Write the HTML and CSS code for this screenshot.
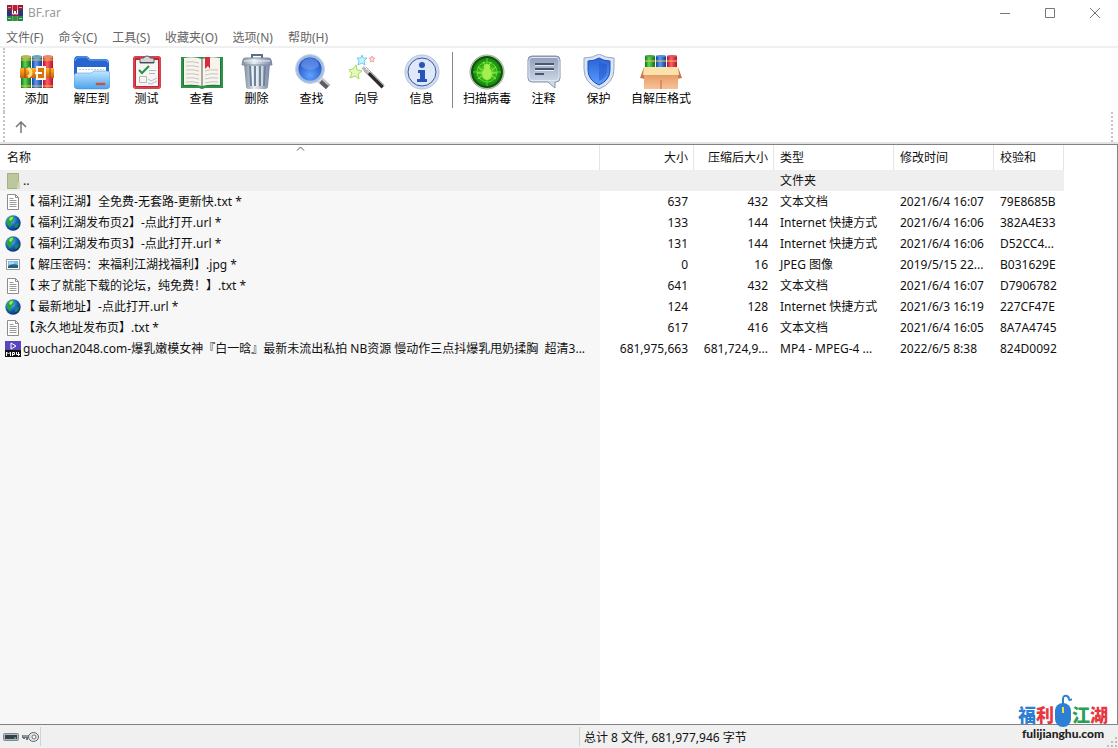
FILE: index.html
```
<!DOCTYPE html>
<html lang="zh-CN">
<head>
    <meta charset="UTF-8">
    <meta name="viewport" content="width=device-width, initial-scale=1.0">
    <title>BF.rar</title>
    <link rel="stylesheet" href="styles.css">
</head>
<body>
    <!-- Gradientes e iconos compartidos -->
    <svg class="defs" width="0" height="0" aria-hidden="true">
        <defs>
            <linearGradient id="green" x1="0" x2="1" y1="0" y2="0"><stop offset="0" stop-color="#0a7420"/><stop offset=".4" stop-color="#5fd64d"/><stop offset="1" stop-color="#0b6a2a"/></linearGradient>
            <linearGradient id="blue" x1="0" x2="1" y1="0" y2="0"><stop offset="0" stop-color="#1244a4"/><stop offset=".4" stop-color="#5a9bf5"/><stop offset="1" stop-color="#163c94"/></linearGradient>
            <linearGradient id="red" x1="0" x2="1" y1="0" y2="0"><stop offset="0" stop-color="#b30d2a"/><stop offset=".4" stop-color="#ff5e6e"/><stop offset="1" stop-color="#b8102c"/></linearGradient>
            <linearGradient id="gold" x1="0" x2="0" y1="0" y2="1"><stop offset="0" stop-color="#ffb52b"/><stop offset="1" stop-color="#cf5d08"/></linearGradient>
            <linearGradient id="sky" x1="0" x2="0" y1="0" y2="1"><stop offset="0" stop-color="#c0e7ff"/><stop offset="1" stop-color="#4ba3ec"/></linearGradient>
            <linearGradient id="steel" x1="0" x2="1" y1="0" y2="0"><stop offset="0" stop-color="#7d8c9e"/><stop offset=".4" stop-color="#e6edf4"/><stop offset="1" stop-color="#7686a0"/></linearGradient>
            <linearGradient id="cloud" x1="0" x2="0" y1="0" y2="1"><stop offset="0" stop-color="#8f9db8"/><stop offset="1" stop-color="#dbe4f2"/></linearGradient>
            <linearGradient id="shield" x1="0" x2="0" y1="0" y2="1"><stop offset="0" stop-color="#2a63d6"/><stop offset="1" stop-color="#5c9cff"/></linearGradient>
            <linearGradient id="carton" x1="0" x2="0" y1="0" y2="1"><stop offset="0" stop-color="#e39a64"/><stop offset="1" stop-color="#f9c298"/></linearGradient>
            <radialGradient id="lens" cx=".5" cy=".75" r=".7"><stop offset="0" stop-color="#5fa2ff"/><stop offset="1" stop-color="#1a46b8"/></radialGradient>
            <radialGradient id="radar"><stop offset="0" stop-color="#8af03c"/><stop offset=".6" stop-color="#2cae12"/><stop offset="1" stop-color="#0b7a0a"/></radialGradient>
            <radialGradient id="earth" cx=".35" cy=".3" r=".8"><stop offset="0" stop-color="#8fd0ff"/><stop offset=".45" stop-color="#1d6cc8"/><stop offset="1" stop-color="#07246b"/></radialGradient>
        </defs>
        <symbol id="txt" viewBox="0 0 16 16">
            <path d="M2.500.5h8l3 3v12h-11z" fill="#fff" stroke="#8c8c8c"/>
            <path d="M10.500.5v3h3" fill="none" stroke="#8c8c8c"/>
            <path d="M4.500 4.500h4M4.500 6.500h7M4.500 8.500h7M4.500 10.500h7M4.500 12.500h7" stroke="#9a9a9a"/>
        </symbol>
        <symbol id="url" viewBox="0 0 16 16">
            <circle cx="8" cy="8" r="7.700" fill="url(#earth)"/>
            <path d="M2 5q2-4 6-4 2 1 1 4l-3 3q1 3-1 4-4-2-3-7z" fill="#27a536"/>
            <path d="M10 9q4-2 4 0-1 4-4 4z" fill="#178a4c"/>
            <path d="M4 4q2-3 4-2 0 3-3 4z" fill="#95e672"/>
        </symbol>
    </svg>

    <header class="titlebar">
        <svg class="app-icon" viewBox="0 0 16 16" aria-hidden="true">
            <path d="M0 0h5v16H0z" fill="#9e2233"/><path d="M5.500 0h5v16h-5z" fill="#c01d38"/><path d="M11 0h5v16h-5z" fill="#8d2034"/>
            <path d="M0 5h5v6H0zM11 5h5v6h-5z" fill="#27357f"/>
            <path d="M0 11h5v5H0zM11 11h5v5h-5z" fill="#1e8a48"/><path d="M5.500 11h5v5h-5z" fill="#2c9a3c"/>
            <path d="M4 5h8v6H4z" fill="#8d2348"/><path d="M5.500 5v4h2V6M8.500 6v3h2V5" fill="none" stroke="#fff"/>
            <path d="M1 2.500h3M12 2.500h3M1 13.500h3M12 13.500h3" stroke="#d9a6a0"/>
        </svg>
        <h1>BF.rar</h1>
        <div class="window-buttons">
            <button aria-label="最小化"><svg viewBox="0 0 12 12"><path d="M1 6.500h10"/></svg></button>
            <button aria-label="最大化"><svg viewBox="0 0 12 12"><path d="M1.500 1.500h9v9h-9z"/></svg></button>
            <button aria-label="关闭"><svg viewBox="0 0 12 12"><path d="M1 1l10 10M11 1L1 11"/></svg></button>
        </div>
    </header>

    <nav class="menu">
        <button>文件(F)</button>
        <button>命令(C)</button>
        <button>工具(S)</button>
        <button>收藏夹(O)</button>
        <button>选项(N)</button>
        <button>帮助(H)</button>
    </nav>

    <div class="bars">
        <div class="toolbar">
            <button>
                <svg class="icon" viewBox="0 0 36 36">
                    <path d="M2 2h10v32H2z" fill="url(#green)"/><path d="M13 2h10v32H13z" fill="url(#blue)"/><path d="M24 2h10v32H24z" fill="url(#red)"/>
                    <path d="M2 6h10M13 6h10M24 6h10M2 32h10M13 32h10M24 32h10" stroke="#f3c53d"/>
                    <ellipse cx="7" cy="3" rx="5" ry="2" fill="#b0bc52"/><ellipse cx="18" cy="3" rx="5" ry="2" fill="#6aa6c2"/><ellipse cx="29" cy="3" rx="5" ry="2" fill="#e88a63"/>
                    <path d="M1 14h34v10H1z" fill="url(#gold)"/>
                    <path d="M6 13v11M31 13v11" stroke="#93470d"/>
                    <path d="M9 14q6 5 0 9" fill="none" stroke="#ffe07a" stroke-width="3"/>
                    <path d="M18 13h8v12h-8z" fill="#d5750f" stroke="#fff2dc" stroke-width="2"/><path d="M16 19h7" stroke="#fff" stroke-width="2"/>
                </svg>
                <span>添加</span>
            </button>
            <button>
                <svg class="icon" viewBox="0 0 36 36">
                    <path d="M0 7q0-5 4-5h8q2 0 4 3h15q4 0 4 4v12H0z" fill="#2765cf"/>
                    <path d="M1 7q1-4 4-4h7q2 1 3 3h16q3 0 3 3" fill="none" stroke="#6aa9ff"/>
                    <path d="M3 13h29v10H3z" fill="#fff"/><path d="M5 15.500h25" stroke="#b9c8db" stroke-dasharray="2 1"/>
                    <path d="M0 22q0-3 3-3h14l3-2h13q3 0 3 3v11q0 4-4 4H4q-4 0-4-4z" fill="url(#sky)" stroke="#3f8fd8" stroke-width=".5"/>
                    <path d="M22 29h9v2h-9z" fill="#e3442d" stroke="#b0645b" stroke-width=".5"/>
                </svg>
                <span>解压到</span>
            </button>
            <button>
                <svg class="icon" viewBox="0 0 36 36">
                    <rect x="4" y="2" width="28" height="33" rx="3" fill="#c4232f"/><rect x="5" y="3" width="26" height="31" rx="2" fill="none" stroke="#e56470"/>
                    <path d="M7 6h22v26H7z" fill="#f5f5f5"/>
                    <path d="M11 9V5q0-1 2-1h2q0-2 3-2t3 2h2q2 0 2 1v4z" fill="#d5d5d5" stroke="#5d5f64"/><path d="M11 8.500h14" stroke="#494b50"/>
                    <path d="M10 16l3 3 7-7" fill="none" stroke="#24913c" stroke-width="2"/>
                    <path d="M20 16.500h7M10.500 22.500h7v6h-7zM20 19.500h6" fill="none" stroke="#b3b8bb"/>
                    <path d="M19 25l3 2 6-3M19 29l3 1 6-3" fill="none" stroke="#b8bbbf"/>
                </svg>
                <span>测试</span>
            </button>
            <button>
                <svg class="icon icon-wide" viewBox="0 0 42 36">
                    <path d="M0 3h42v31H24l-3 1-3-1H0z" fill="#1b7b37"/><path d="M1 4h40v29H1z" fill="none" stroke="#47a858"/>
                    <path d="M3 4q10-2 18 1 8-3 18-1v27q-10-1-18 1-8-2-18-1z" fill="#f6f4ec"/>
                    <path d="M21 5v27" stroke="#aaa69c" stroke-width="2"/>
                    <path d="M5 8q7-1 13 1M5 12q7-1 13 1M5 16q7-1 13 1M5 20q7-1 13 1M5 24q7-1 13 1M5 28q7-1 13 1M24 17q6-2 13-1M24 21q6-2 13-1M24 25q6-2 13-1M24 29q6-2 13-1" fill="none" stroke="#c6c4bc"/>
                    <path d="M24 3h5v12l-2-3-3 3z" fill="#d62c3d"/>
                </svg>
                <span>查看</span>
            </button>
            <button>
                <svg class="icon" viewBox="0 0 36 36">
                    <path d="M13 4V1h10v3" fill="none" stroke="#5e6e7e" stroke-width="2"/>
                    <path d="M5 10h26l-2 22q0 3-3 3H10q-3 0-3-3z" fill="url(#steel)"/>
                    <path d="M11 12l1 20M16 12v20M21 12v20M26 12l-1 20" stroke="#6f8299" stroke-width="2"/><path d="M13 12l1 20M18 12v20M23 12v20" stroke="#f4f8fc"/>
                    <path d="M4 6q0-2 3-2h22q3 0 3 2l1 5H3z" fill="url(#steel)" stroke="#7a8aa0"/>
                    <path d="M5 7h26" stroke="#edf3f8"/>
                </svg>
                <span>删除</span>
            </button>
            <button>
                <svg class="icon" viewBox="0 0 36 36">
                    <path d="M24 24l10 9" stroke="#5c5e63" stroke-width="6"/><path d="M25 22l10 9" stroke="#c6c9cd" stroke-width="2"/>
                    <path d="M22 23l5 4" stroke="#d9dce0" stroke-width="5"/>
                    <circle cx="16" cy="15" r="13" fill="url(#lens)" stroke="#a2bbe0" stroke-width="3"/>
                    <circle cx="16" cy="15" r="14.500" fill="none" stroke="#c5d4ea"/>
                    <path d="M7 12a9 8 0 0 1 18 0q-9 8-18 0z" fill="#6f9fee" opacity=".6"/>
                </svg>
                <span>查找</span>
            </button>
            <button>
                <svg class="icon" viewBox="0 0 36 36">
                    <path d="M16 15l18 18" stroke="#2c2c2c" stroke-width="4"/><path d="M17 14l18 18" stroke="#a4a4a4"/><path d="M14 13l6 6" stroke="#bbb" stroke-width="4"/><path d="M15 12l6 6" stroke="#f5f5f5"/>
                    <path d="M7 11l1 5 5 1-4 3 1 5-4-3-5 2 2-5-4-3 5-1z" fill="#e6fabf" stroke="#a5dc55"/>
                    <path d="M13 1l1 3 4 0-3 3 1 4-3-2-4 2 1-4-2-3h4z" fill="#c8f3ff" stroke="#6dd0ea"/>
                    <path d="M23 2l1 2h2l-2 2 1 2-2-1-2 1 1-2-2-2h2z" fill="#ffe0e0" stroke="#f0a4aa"/>
                </svg>
                <span>向导</span>
            </button>
            <button>
                <svg class="icon" viewBox="0 0 36 36">
                    <circle cx="18" cy="18" r="17" fill="#d2dcef" stroke="#b5c3db"/>
                    <circle cx="18" cy="18" r="14" fill="#dfe8f8" stroke="#3656a5"/>
                    <circle cx="18" cy="11" r="3" fill="#2554bc"/>
                    <path d="M14 16h7v9h2v3H13v-3h3v-6h-2z" fill="#2554bc"/>
                </svg>
                <span>信息</span>
            </button>
            <div class="separator"></div>
            <button>
                <svg class="icon" viewBox="0 0 36 36">
                    <circle cx="18" cy="18" r="17" fill="#d0dacc" stroke="#9cab99"/>
                    <circle cx="18" cy="18" r="15" fill="url(#radar)" stroke="#12500f" stroke-width="2"/>
                    <circle cx="18" cy="18" r="10" fill="none" stroke="#5cd33c"/><path d="M18 4v28M4 18h28" stroke="#5bd53a"/>
                    <path d="M13 16l-4-3M13 19H8M13 22l-4 3M23 16l4-3M23 19h5M23 22l4 3M16 11l-2-3M20 11l2-3" stroke="#a6ee50"/>
                    <ellipse cx="18" cy="20" rx="5" ry="6" fill="#a6ee50"/><circle cx="18" cy="13" r="3" fill="#a6ee50"/>
                </svg>
                <span>扫描病毒</span>
            </button>
            <button>
                <svg class="icon" viewBox="0 0 36 36">
                    <path d="M6 2h24q4 0 4 4v18q0 4-4 4h-1v6l-7-6H6q-4 0-4-4V6q0-4 4-4z" fill="url(#cloud)" stroke="#8792a8"/>
                    <path d="M6 3.500h24q3 0 3 3v17q0 3-3 3H6q-3 0-3-3v-17q0-3 3-3z" fill="none" stroke="#e1e9f5"/>
                    <path d="M9 10h19M9 15h19M9 20h9" stroke="#4b5770" stroke-width="2"/><path d="M9 11.500h19M9 16.500h19" stroke="#fff" opacity=".7"/>
                </svg>
                <span>注释</span>
            </button>
            <button>
                <svg class="icon" viewBox="0 0 36 36">
                    <path d="M18 0q6 4 15 4v11q0 14-15 20Q3 29 3 15V4q9 0 15-4z" fill="#dae4f2" stroke="#91a9cb"/>
                    <path d="M18 4q5 3 11 3v9q0 10-11 15Q7 26 7 16V7q6 0 11-3z" fill="url(#shield)" stroke="#1e50b8"/>
                    <path d="M18 8q4 2 8 2v6q0 7-8 11z" fill="#1e54c9" opacity=".5"/>
                </svg>
                <span>保护</span>
            </button>
            <button>
                <svg class="icon icon-wide" viewBox="0 0 42 36">
                    <path d="M5 2h10v14H5z" fill="url(#green)"/><path d="M16 2h10v14H16z" fill="url(#blue)"/><path d="M27 2h10v14H27z" fill="url(#red)"/>
                    <path d="M5 7h10M16 7h10M27 7h10" stroke="#f5cb42"/>
                    <ellipse cx="10" cy="2" rx="5" ry="1" fill="#4d9f4b"/><ellipse cx="21" cy="2" rx="5" ry="1" fill="#578fc9"/><ellipse cx="32" cy="2" rx="5" ry="1" fill="#d8575f"/>
                    <path d="M4 13L0 24l5 1M38 13l4 11-5 1" fill="#c97a4b"/>
                    <path d="M4 20h34v15H4z" fill="url(#carton)"/><path d="M4 13h34l1 8H3z" fill="#fbe2aa"/>
                    <path d="M21 26v9" stroke="#bb6d3b"/>
                </svg>
                <span>自解压格式</span>
            </button>
        </div>
        <div class="address">
            <button aria-label="上一级"><svg viewBox="0 0 12 12"><path d="M6 12V2M1 6l5-5 5 5" fill="none" stroke="#777" stroke-width="1.500"/></svg></button>
        </div>
    </div>

    <main class="list">
        <table>
            <colgroup>
                <col class="col-name"><col class="col-size"><col class="col-packed"><col class="col-type"><col class="col-date"><col class="col-crc">
            </colgroup>
            <thead>
                <tr>
                    <th class="sorted">名称<svg class="sort" viewBox="0 0 9 5"><path d="M1 4.500l3.500-3.500L8 4.500" fill="none" stroke="#555"/></svg></th>
                    <th class="num">大小</th><th class="num">压缩后大小</th><th>类型</th><th>修改时间</th><th>校验和</th>
                </tr>
            </thead>
            <tbody>
                <tr class="selected">
                    <td><svg class="file-icon" viewBox="0 0 16 16"><path d="M2 0h12v16H2z" fill="#bcc79b"/><path d="M2.500.5h11v15h-11z" fill="none" stroke="#a6b181"/><path d="M13 9h2v7h-3z" fill="#d1d8b4"/></svg>..</td>
                    <td class="num"></td><td class="num"></td><td>文件夹</td><td></td><td></td>
                </tr>
                <tr>
                    <td><svg class="file-icon"><use href="#txt"/></svg>【 福利江湖】全免费-无套路-更新快.txt *</td>
                    <td class="num">637</td><td class="num">432</td><td>文本文档</td><td>2021/6/4 16:07</td><td>79E8685B</td>
                </tr>
                <tr>
                    <td><svg class="file-icon"><use href="#url"/></svg>【 福利江湖发布页2】-点此打开.url *</td>
                    <td class="num">133</td><td class="num">144</td><td>Internet 快捷方式</td><td>2021/6/4 16:06</td><td>382A4E33</td>
                </tr>
                <tr>
                    <td><svg class="file-icon"><use href="#url"/></svg>【 福利江湖发布页3】-点此打开.url *</td>
                    <td class="num">131</td><td class="num">144</td><td>Internet 快捷方式</td><td>2021/6/4 16:06</td><td>D52CC4...</td>
                </tr>
                <tr>
                    <td><svg class="file-icon" viewBox="0 0 16 16"><path d="M1.500 2.500h13v10h-13z" fill="#fff" stroke="#9a9a9a"/><path d="M3 4h10v7H3z" fill="#7dbde9"/><path d="M3 9q5-3 10-1v3H3z" fill="#28617f"/><path d="M4 6h5" stroke="#e6f5ff"/></svg>【 解压密码：来福利江湖找福利】.jpg *</td>
                    <td class="num">0</td><td class="num">16</td><td>JPEG 图像</td><td>2019/5/15 22...</td><td>B031629E</td>
                </tr>
                <tr>
                    <td><svg class="file-icon"><use href="#txt"/></svg>【 来了就能下载的论坛，纯免费！】.txt *</td>
                    <td class="num">641</td><td class="num">432</td><td>文本文档</td><td>2021/6/4 16:07</td><td>D7906782</td>
                </tr>
                <tr>
                    <td><svg class="file-icon"><use href="#url"/></svg>【 最新地址】-点此打开.url *</td>
                    <td class="num">124</td><td class="num">128</td><td>Internet 快捷方式</td><td>2021/6/3 16:19</td><td>227CF47E</td>
                </tr>
                <tr>
                    <td><svg class="file-icon"><use href="#txt"/></svg>【永久地址发布页】.txt *</td>
                    <td class="num">617</td><td class="num">416</td><td>文本文档</td><td>2021/6/4 16:05</td><td>8A7A4745</td>
                </tr>
                <tr>
                    <td><svg class="file-icon" viewBox="0 0 16 16"><path d="M0 0h16v10H0z" fill="#5b45bd"/><path d="M0 9h16v7H0z" fill="#111"/><path d="M6 2l5 3-5 3z" fill="none" stroke="#fff"/><path d="M1.500 15v-4l2 2 2-2v4M7.500 15v-3.500h2v2h-2M13.500 15v-4M11.500 11v2.500H15" fill="none" stroke="#fff"/></svg>guochan2048.com-爆乳嫩模女神『白一晗』最新未流出私拍 NB资源 慢动作三点抖爆乳甩奶揉胸  超清3...</td>
                    <td class="num">681,975,663</td><td class="num">681,724,9...</td><td>MP4 - MPEG-4 ...</td><td>2022/6/5 8:38</td><td>824D0092</td>
                </tr>
            </tbody>
        </table>
    </main>

    <footer class="status">
        <div class="status-icons">
            <svg class="disk" viewBox="0 0 16 8"><rect x=".5" y=".5" width="15" height="7" rx="1" fill="#aebac2" stroke="#7b8992"/><path d="M2 2h12v4H2z" fill="#334249"/><path d="M11 5h2" stroke="#8bd0b0"/></svg>
            <svg class="key" viewBox="0 0 17 10"><path d="M0 3h9v4H7V6H6v2H4V6H3v1H1V6H0z" fill="#6d7478"/><path d="M1 4h7" stroke="#b9bfc2"/><ellipse cx="11.500" cy="5" rx="5" ry="4.500" fill="#dfe3e5" stroke="#60686c"/><circle cx="12" cy="5" r="2" fill="#fff" stroke="#777"/></svg>
        </div>
        <div class="pane"></div>
        <div class="pane">总计 8 文件, 681,977,946 字节</div>
    </footer>

    <!-- Marca del sitio, encima de la lista -->
    <div class="watermark">
        <div class="brand">
            <span class="brand-blue">福</span><span class="brand-red">利</span>
            <svg class="mouse" viewBox="0 0 18 34"><path d="M9 10V5q0-4 4-3 2 1 2 3t3 0" fill="none" stroke="#2f80d0" stroke-width="2"/><rect x="1" y="9" width="16" height="24" rx="8" fill="#2b7fd4"/><path d="M9 13v6" stroke="#f5d94c" stroke-width="2"/></svg>
            <span class="brand-green">江</span><span class="brand-red">湖</span>
        </div>
        <div class="domain">fulijianghu.com</div>
    </div>
    <svg class="grip" viewBox="0 0 10 10"><path d="M8 0h2v2H8zM4 4h2v2H4zM8 4h2v2H8zM0 8h2v2H0zM4 8h2v2H4zM8 8h2v2H8z" fill="#bdbdbd"/></svg>
</body>
</html>
```
FILE: styles.css
```
* {
    box-sizing: border-box;
}
body {
    margin: 0;
    height: 100vh;
    display: flex;
    flex-direction: column;
    position: relative;
    overflow: hidden;
    background-color: #fff;
    color: #111;
    font-family: "Noto Sans", "Noto Sans CJK SC", sans-serif;
    font-size: 12px;
    line-height: 16px;
}
button {
    background: none;
    border: none;
    padding: 0;
    color: inherit;
    font: inherit;
}
svg {
    display: block;
}
.defs {
    position: absolute;
}

/* Barra de título */
.titlebar {
    display: flex;
    align-items: center;
    height: 25px;
    padding-left: 7px;
    color: #999;
}
.app-icon {
    width: 16px;
    height: 16px;
    margin-right: 5px;
}
h1 {
    margin: 0;
    font-size: 12px;
    font-weight: normal;
}
.window-buttons {
    display: flex;
    margin-left: auto;
    margin-right: 1px;
}
.window-buttons button {
    display: flex;
    justify-content: center;
    width: 45px;
}
.window-buttons svg {
    width: 12px;
    height: 12px;
    fill: none;
    stroke: #777;
}

/* Menú */
.menu {
    display: flex;
    gap: 15px;
    height: 23px;
    padding: 4px 0 0 6px;
    border-bottom: 2px solid #f0f0f0;
    color: #666;
}

/* Barra de herramientas */
.bars {
    border-bottom: 2px solid #e3e3e3;
}
.toolbar, .address {
    display: flex;
    margin-left: 3px;
    border-left: 2px dotted #c4c4c4;
}
.toolbar {
    height: 64px;
    padding: 4px 0 0 4px;
}
.toolbar button {
    display: flex;
    flex-direction: column;
    align-items: center;
    gap: 1px;
    min-width: 55px;
    height: 56px;
    padding: 2px 5px 0;
    color: #000;
    white-space: nowrap;
}
.icon {
    width: 36px;
    height: 36px;
    flex: none;
}
.icon-wide {
    width: 42px;
}
.separator {
    width: 1px;
    height: 56px;
    margin: 0 5px 0 3px;
    background-color: #888;
}
.address {
    height: 30px;
    align-items: center;
    margin-right: 5px;
    padding-left: 10px;
    border-right: 2px dotted #c4c4c4;
}
.address svg {
    width: 12px;
    height: 12px;
}

/* Lista de archivos */
.list {
    flex: 1;
    min-height: 0;
    overflow: hidden;
    border: 1px solid #828282;
    border-left: none;
    /* la columna ordenada queda sombreada hasta abajo */
    background: linear-gradient(#f7f7f7, #f7f7f7) no-repeat 0 0 / 600px 100%;
}
table {
    width: 1064px;
    table-layout: fixed;
    border-collapse: separate;
    border-spacing: 0;
}
.col-name {
    width: 600px;
}
.col-size {
    width: 94px;
}
.col-packed {
    width: 80px;
}
.col-type {
    width: 120px;
}
.col-date {
    width: 100px;
}
.col-crc {
    width: 70px;
}
th {
    height: 25px;
    padding: 0 5px 0 6px;
    border-right: 1px solid #e5e5e5;
    background-color: #fff;
    font-weight: normal;
    text-align: left;
}
th:first-child {
    padding-left: 7px;
}
.sorted {
    position: relative;
}
.sort {
    position: absolute;
    top: 1px;
    left: 50%;
    width: 9px;
    height: 5px;
    margin-left: -4px;
}
td {
    height: 21px;
    padding: 0 0 0 6px;
    overflow: hidden;
    white-space: pre;
}
td:first-child {
    padding-left: 5px;
}
th.num, td.num {
    text-align: right;
}
td.num {
    padding-right: 6px;
}
.selected td {
    background-color: #efefef;
}
.file-icon {
    display: inline-block;
    width: 16px;
    height: 16px;
    margin-right: 2px;
    vertical-align: top;
}

/* Barra de estado */
.status {
    display: flex;
    height: 23px;
    padding: 2px 0;
    background-color: #f0f0f0;
}
.status-icons {
    display: flex;
    align-items: center;
    gap: 3px;
    width: 41px;
    padding-left: 3px;
    border-right: 1px solid #d2d2d2;
}
.disk {
    width: 16px;
    height: 8px;
    flex: none;
}
.key {
    width: 17px;
    height: 10px;
    flex: none;
}
.pane {
    flex: 1;
    padding: 3px 4px 0;
    border-right: 1px solid #d2d2d2;
}
.pane:last-child {
    border-right: none;
}

.watermark {
    position: absolute;
    right: 10px;
    bottom: 8px;
    width: 90px;
}
.brand {
    display: flex;
    align-items: flex-end;
    height: 34px;
    font-size: 18px;
    font-weight: 900;
    line-height: 26px;
}
.brand-blue {
    color: #2b7fd4;
}
.brand-red {
    color: #e6393f;
}
.brand-green {
    color: #26a052;
}
.mouse {
    flex: none;
    width: 18px;
    height: 34px;
}
.domain {
    color: #222;
    font-family: Lato, sans-serif;
    font-size: 12px;
    font-weight: 900;
    line-height: 12px;
    text-align: center;
}
.grip {
    position: absolute;
    right: 1px;
    bottom: 1px;
    width: 10px;
    height: 10px;
}
```
